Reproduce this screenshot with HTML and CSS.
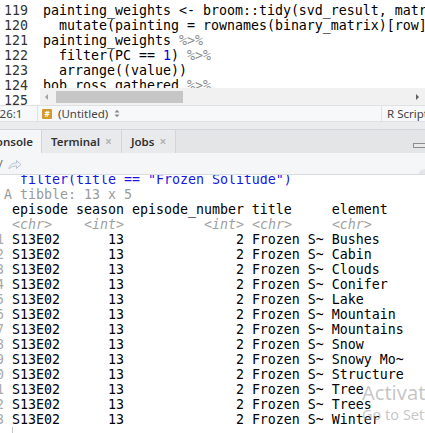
FILE: index.html
```html
<!DOCTYPE html>
<html>
<head>
<meta charset="utf-8">
<link rel="stylesheet" href="styles.css">
</head>
<body>
<div class="app">
  <div class="editor">
    <div class="gutter">
      <div class="ln">118</div>
      <div class="ln">119</div>
      <div class="ln">120</div>
      <div class="ln">121</div>
      <div class="ln">122</div>
      <div class="ln">123</div>
      <div class="ln">124</div>
      <div class="ln">125</div>
    </div>
    <div class="codecol">
      <div class="code">
        <div class="cl"> </div>
        <div class="cl">painting_weights &lt;- broom::tidy(svd_result, matrix = "u") %&gt;%</div>
        <div class="cl">  mutate(painting = rownames(binary_matrix)[row])</div>
        <div class="cl">painting_weights <span class="op">%&gt;%</span></div>
        <div class="cl">  filter(PC == <span class="num">1</span>) <span class="op">%&gt;%</span></div>
        <div class="cl">  arrange((value))</div>
        <div class="cl">bob_ross_gathered <span class="op">%&gt;%</span></div>
      </div>
      <div class="hscroll">
        <span class="arr arr-l"></span>
        <span class="thumb"></span>
        <span class="grow"></span>
        <span class="arr arr-r"></span>
      </div>
    </div>
  </div>

  <div class="status">
    <span class="pos">126:1</span>
    <span class="sep"></span>
    <span class="hash">#</span>
    <span class="untitled">(Untitled)</span>
    <svg class="updown" width="6" height="9" viewBox="0 0 6 9"><path d="M0.5 3.5 L3 0.8 L5.5 3.5Z M0.5 5.5 L3 8.2 L5.5 5.5Z" fill="#8a8a8a"/></svg>
    <span class="grow"></span>
    <span class="sep"></span>
    <span class="rscript">R Script</span>
  </div>

  <div class="splitter"></div>

  <div class="tabs">
    <div class="tab active">onsole</div>
    <div class="tab">Terminal <span class="x">×</span></div>
    <div class="tab">Jobs <span class="x">×</span></div>
    <span class="grow"></span>
    <svg class="winbtn" width="22" height="14" viewBox="0 0 22 14">
      <rect x="1.5" y="7.5" width="12" height="4" fill="#e8e8e8" stroke="#8d8d8d"/>
      <rect x="16.5" y="1.5" width="10" height="10" fill="#f3f3f3" stroke="#8d8d8d"/>
      <rect x="16.5" y="1.5" width="10" height="2" fill="#8d8d8d"/>
    </svg>
  </div>

  <div class="toolbar">
    <span class="path">~/</span>
    <svg class="goto" width="14" height="11" viewBox="0 0 14 11"><path d="M1 10 C1.5 5.5 4.5 4 8.5 4 L8.5 1.5 L13 5.5 L8.5 9.5 L8.5 7 C5 7 2.8 8 1 10Z" fill="#eef2f6" stroke="#b9c4d0" stroke-width="1"/></svg>
    <span class="grow"></span>
    <svg class="broom" width="8" height="6" viewBox="0 0 8 6"><path d="M1 6 L4 2 L8 1 L8 6Z" fill="#e3e6ea"/></svg>
  </div>

  <div class="console">
<pre class="out"><span class="cmd">+   filter(title == "Frozen Solitude")</span>
<span class="dim"># A tibble: 13 x 5</span>
   episode season episode_number title     element
   <span class="ty">&lt;chr&gt;</span>    <span class="ty">&lt;int&gt;</span>          <span class="ty">&lt;int&gt;</span> <span class="ty">&lt;chr&gt;</span>     <span class="ty">&lt;chr&gt;</span>
<span class="rn"> 1</span> S13E02      13              2 Frozen S~ Bushes
<span class="rn"> 2</span> S13E02      13              2 Frozen S~ Cabin
<span class="rn"> 3</span> S13E02      13              2 Frozen S~ Clouds
<span class="rn"> 4</span> S13E02      13              2 Frozen S~ Conifer
<span class="rn"> 5</span> S13E02      13              2 Frozen S~ Lake
<span class="rn"> 6</span> S13E02      13              2 Frozen S~ Mountain
<span class="rn"> 7</span> S13E02      13              2 Frozen S~ Mountains
<span class="rn"> 8</span> S13E02      13              2 Frozen S~ Snow
<span class="rn"> 9</span> S13E02      13              2 Frozen S~ Snowy Mo~
<span class="rn">10</span> S13E02      13              2 Frozen S~ Structure
<span class="rn">11</span> S13E02      13              2 Frozen S~ Tree
<span class="rn">12</span> S13E02      13              2 Frozen S~ Trees
<span class="rn">13</span> S13E02      13              2 Frozen S~ Winter
<span class="dim">&gt; </span> <span class="cursor"></span></pre>
    <div class="watermark">
      <div class="wm1">Activate Windows</div>
      <div class="wm2">Go to Settings to activate Windows.</div>
    </div>
  </div>
</div>
</body>
</html>
```

FILE: styles.css
```css
html, body {
  margin: 0;
  padding: 0;
  background: #ffffff;
}
.app {
  width: 425px;
  height: 433px;
  overflow: hidden;
  display: flex;
  flex-direction: column;
}
.grow { flex: 1; }

/* editor */
.editor {
  height: 105px;
  flex: none;
  display: grid;
  grid-template-columns: 40px 1fr;
  overflow: hidden;
  background: #fff;
  font-family: "DejaVu Sans Mono", monospace;
  font-size: 13.29px;
  line-height: 15px;
}
.gutter {
  margin-top: -12px;
  padding-right: 12px;
  text-align: right;
  color: #333;
}
.ln { height: 15px; }
.codecol {
  display: flex;
  flex-direction: column;
  min-width: 0;
}
.code {
  height: 88px;
  overflow: hidden;
  color: #000;
}
.code .cl:first-child { margin-top: -12px; }
.cl { height: 15px; padding-left: 3px; white-space: pre; }
.op { color: #8e8e8e; }
.num { color: #0000e0; }
.hscroll {
  height: 17px;
  background: #f1f1f1;
  display: flex;
  align-items: center;
}
.thumb {
  width: 127px;
  height: 12px;
  background: #c6c6c6;
}
.arr {
  width: 0;
  height: 0;
  border-top: 3px solid transparent;
  border-bottom: 3px solid transparent;
}
.arr-l {
  border-right: 3px solid #a3a3a3;
  margin-left: 5px;
  margin-right: 8px;
}
.arr-r {
  border-left: 3px solid #606060;
  margin-right: 6px;
}

/* status bar */
.status {
  height: 15px;
  flex: none;
  border-top: 1px solid #dfe1e3;
  border-bottom: 1px solid #dfe1e3;
  background: #f7f8f9;
  display: flex;
  align-items: center;
  font-family: "Noto Sans", sans-serif;
  font-size: 11.5px;
  color: #444;
}
.pos { margin-left: -7px; width: 44px; }
.sep { width: 1px; height: 15px; background: #dfe1e3; }
.hash {
  width: 10px;
  height: 10px;
  margin-left: 4px;
  background: #d59a2b;
  border-radius: 1px;
  color: #fff;
  font-size: 8px;
  font-weight: 700;
  line-height: 10px;
  text-align: center;
}
.untitled { margin-left: 6px; }
.updown { margin-left: 6px; }
.rscript { margin-left: 5px; width: 38px; white-space: nowrap; }

.splitter {
  height: 7px;
  flex: none;
  background: #ebeced;
}

/* tabs */
.tabs {
  height: 23px;
  flex: none;
  background: #e3e5e7;
  border-top: 1px solid #d3d6d9;
  display: flex;
  align-items: stretch;
  font-family: "Noto Sans", sans-serif;
  font-size: 11.5px;
  font-weight: 600;
  color: #333;
}
.tab {
  display: flex;
  align-items: center;
  padding: 0 9px;
  border-right: 1px solid #d3d6d9;
  background: #e9eaec;
  white-space: nowrap;
}
.tab.active {
  background: #f4f6f8;
  margin-left: -9px;
  width: 33px;
  padding-right: 8px;
  padding-left: 9px;
  justify-content: flex-end;
}
.tab .x {
  color: #b3b3b3;
  font-weight: 700;
  margin-left: 5px;
  font-size: 12px;
}
.winbtn { align-self: center; margin-top: 3px; margin-right: -9px; }

/* toolbar */
.toolbar {
  height: 21px;
  flex: none;
  background: #f4f6f8;
  border-bottom: 1px solid #d9dcdf;
  display: flex;
  align-items: center;
  font-family: "Noto Sans", sans-serif;
  font-size: 11.5px;
  color: #666;
}
.path { margin-left: -8px; }
.goto { margin-left: 5px; margin-top: 1px; }
.broom { align-self: flex-end; margin-right: 0; }

/* console */
.console {
  flex: 1;
  position: relative;
  background: #fff;
  overflow: hidden;
}
.out {
  margin: -3px 0 0 -12px;
  font-family: "DejaVu Sans Mono", monospace;
  font-size: 13.29px;
  line-height: 15px;
  color: #000;
  white-space: pre;
}
.cmd { color: #1616e6; }
.dim { color: #9a9a9a; }
.rn { color: #a9a9a9; }
.ty { color: #a0a0a0; font-style: italic; }
.cursor {
  display: inline-block;
  width: 1px;
  height: 15px;
  background: #c8c8c8;
  vertical-align: top;
}
.watermark {
  position: absolute;
  left: 362px;
  top: 206px;
  font-family: "Noto Sans", sans-serif;
  color: rgba(150, 150, 150, 0.55);
  white-space: nowrap;
}
.wm1 { font-size: 20px; line-height: 24px; }
.wm2 { font-size: 14.5px; line-height: 18px; margin-top: 0; }
```
